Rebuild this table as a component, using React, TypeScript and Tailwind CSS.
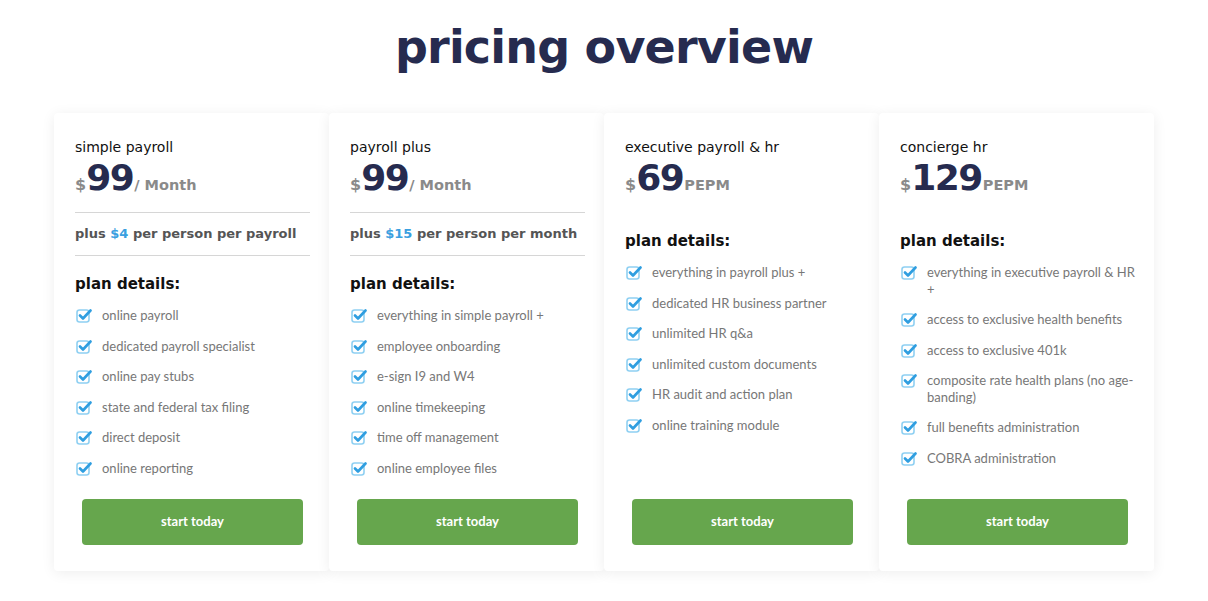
import React from "react";

type Plan = {
  name: string;
  price: string;
  unit: string;
  extra?: { amount: string; rest: string };
  features: string[];
};

const plans: Plan[] = [
  {
    name: "simple payroll",
    price: "99",
    unit: "/ Month",
    extra: { amount: "$4", rest: "per person per payroll" },
    features: [
      "online payroll",
      "dedicated payroll specialist",
      "online pay stubs",
      "state and federal tax filing",
      "direct deposit",
      "online reporting",
    ],
  },
  {
    name: "payroll plus",
    price: "99",
    unit: "/ Month",
    extra: { amount: "$15", rest: "per person per month" },
    features: [
      "everything in simple payroll +",
      "employee onboarding",
      "e-sign I9 and W4",
      "online timekeeping",
      "time off management",
      "online employee files",
    ],
  },
  {
    name: "executive payroll & hr",
    price: "69",
    unit: "PEPM",
    features: [
      "everything in payroll plus +",
      "dedicated HR business partner",
      "unlimited HR q&a",
      "unlimited custom documents",
      "HR audit and action plan",
      "online training module",
    ],
  },
  {
    name: "concierge hr",
    price: "129",
    unit: "PEPM",
    features: [
      "everything in executive payroll & HR +",
      "access to exclusive health benefits",
      "access to exclusive 401k",
      "composite rate health plans (no age-banding)",
      "full benefits administration",
      "COBRA administration",
    ],
  },
];

const head = "font-['DejaVu_Sans',sans-serif]";

function CheckIcon() {
  return (
    <svg width="16" height="15" viewBox="0 0 16 15" className="shrink-0 mt-[1px]">
      <rect x="1" y="2" width="12" height="12" rx="2.5" fill="none" stroke="#8fd0f2" strokeWidth="1.6" />
      <path d="M4 7.5 L7 10.5 L14.5 2.5" fill="none" stroke="#2f9ee0" strokeWidth="2.6" strokeLinecap="round" strokeLinejoin="round" />
    </svg>
  );
}

function PlanCard({ plan }: { plan: Plan }) {
  return (
    <div className="w-[275px] h-[458px] bg-white rounded-[4px] shadow-[0_2px_14px_rgba(0,0,0,0.07)] flex flex-col pt-[25px] pb-[26px] pl-[21px] pr-[19px]">
      <div className={`${head} text-[14px] text-[#111] leading-[18px]`}>{plan.name}</div>
      <div className={`${head} flex items-baseline mt-[4px] h-[36px]`}>
        <span className="text-[16px] text-[#8a8a8a] font-semibold">$</span>
        <span className="text-[36px] leading-[36px] text-[#262b4f] font-semibold tracking-[-1.5px]">{plan.price}</span>
        <span className="text-[14.5px] ml-[1px] text-[#8a8a8a] font-semibold">{plan.unit}</span>
      </div>
      {plan.extra ? (
        <div className="mt-[16px] border-t border-b border-[#d6d6d6] py-[11px]">
          <div className={`${head} text-[13px] font-semibold text-[#555] leading-[20px] whitespace-nowrap`}>
            plus <span className="text-[#3aa0e0]">{plan.extra.amount}</span> {plan.extra.rest}
          </div>
        </div>
      ) : (
        <div className="h-[18px]" />
      )}
      <div className={`${head} font-bold text-[15px] text-[#111] leading-[20px] ${plan.extra ? "mt-[18px]" : "mt-[17px]"}`}>
        plan details:
      </div>
      <ul className={`${plan.extra ? "mt-[13px]" : "mt-[13px]"} flex flex-col gap-[14px] font-['Lato',sans-serif] text-[13px] text-[#777] leading-[16.5px]`}>
        {plan.features.map((f) => (
          <li key={f} className="flex gap-[10px] pl-[1px]">
            <CheckIcon />
            <span>{f}</span>
          </li>
        ))}
      </ul>
      <div className="mt-auto pt-[20px] px-[7px]">
        <button className="w-full h-[46px] rounded-[4px] bg-[#66a64d] text-white font-['Lato',sans-serif] font-bold text-[13px]">
          start today
        </button>
      </div>
    </div>
  );
}

export default function App() {
  return (
    <div className="w-[1208px] h-[601px] bg-white flex flex-col items-center">
      <h1 className={`${head} font-bold text-[46px] leading-[56px] text-[#262b4f] mt-[19px] tracking-[-0.8px]`}>
        pricing overview
      </h1>
      <div className="mt-[38px] flex">
        {plans.map((p) => (
          <PlanCard key={p.name} plan={p} />
        ))}
      </div>
    </div>
  );
}
